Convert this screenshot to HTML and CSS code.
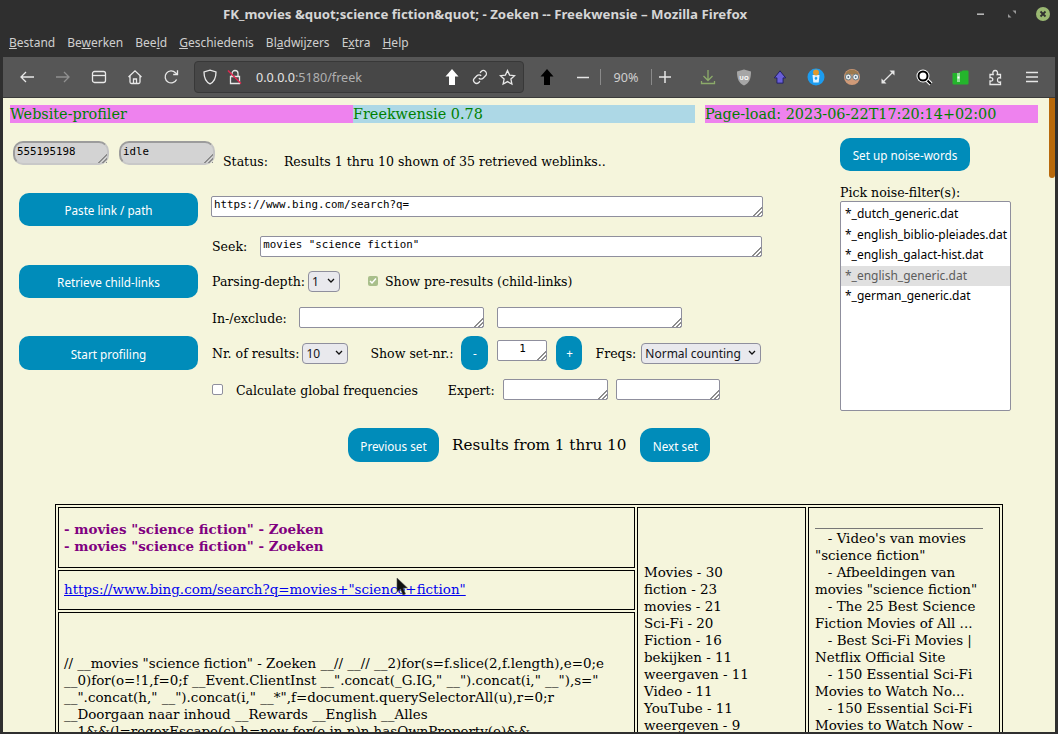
FILE: index.html
```html
<!DOCTYPE html>
<html lang="nl">
<head>
<meta charset="utf-8">
<title>FK_movies &amp;quot;science fiction&amp;quot; - Zoeken -- Freekwensie</title>
<link rel="stylesheet" href="styles.css">
</head>
<body>
<header class="titlebar">
  <div class="title">FK_movies &amp;quot;science fiction&amp;quot; - Zoeken -- Freekwensie – Mozilla Firefox</div>
  <div class="winctl">
    <svg width="12" height="12" viewBox="0 0 12 12"><rect x="1" y="5.400" width="7" height="1.600" fill="#b5b5b5"/></svg>
    <svg width="12" height="12" viewBox="0 0 12 12"><path d="M6.500 2.500h3.500v3.500zM2 9.500V6l3.500 3.500z" fill="#9a9a9a"/></svg>
    <svg width="14" height="14" viewBox="0 0 14 14"><circle cx="7" cy="7" r="7" fill="#9ab872"/><path d="M4.5 4.5l5 5M9.5 4.5l-5 5" stroke="#2f2f2f" stroke-width="1.8"/></svg>
  </div>
</header>
<nav class="menubar">
  <span><u>B</u>estand</span>
  <span>Be<u>w</u>erken</span>
  <span>Bee<u>l</u>d</span>
  <span><u>G</u>eschiedenis</span>
  <span>Bl<u>a</u>dwijzers</span>
  <span>E<u>x</u>tra</span>
  <span><u>H</u>elp</span>
</nav>
<div class="toolbar">
  <span class="tb"><svg width="16" height="16" viewBox="0 0 16 16" class="ln"><path d="M15 8H2M7 3L2 8l5 5"/></svg></span>
  <span class="tb dim"><svg width="16" height="16" viewBox="0 0 16 16" class="ln"><path d="M1 8h13M9 3l5 5-5 5"/></svg></span>
  <span class="tb"><svg width="16" height="16" viewBox="0 0 16 16" class="ln"><rect x="1.5" y="2.5" width="13" height="11" rx="2"/><path d="M1.5 6.5h13"/></svg></span>
  <span class="tb"><svg width="16" height="16" viewBox="0 0 16 16" class="ln"><path d="M1.5 8L8 1.8 14.5 8M3 7v6a1.5 1.5 0 0 0 1.5 1.5h7A1.5 1.5 0 0 0 13 13V7M6.5 14.5V10h3v4.5"/></svg></span>
  <span class="tb"><svg width="16" height="16" viewBox="0 0 16 16" class="ln"><path d="M13.6 10.5A6 6 0 1 1 12.5 3.8L14 5.2"/><path d="M14.5 1.2v4.3h-4.3" /></svg></span>
  <div class="urlbar">
    <svg class="ln shield" width="16" height="16" viewBox="0 0 16 16"><path d="M8 1.2l6 1.8c0 6-1.5 9.8-6 11.8-4.500-2-6-5.800-6-11.800z"/></svg>
    <svg class="lock" width="16" height="16" viewBox="0 0 16 16"><path d="M5 7V4.500a3 3 0 0 1 6 0V7M3.500 7.500h9v7h-9z" fill="none" stroke="#e8e8e8" stroke-width="1.300"/><path d="M1 1.500l13 13" stroke="#e22850" stroke-width="1.500"/></svg>
    <span class="url"><b>0.0.0.0</b>:5180/freek</span>
    <svg class="up" width="16" height="18" viewBox="0 0 16 18"><path d="M8 1l6.500 7.500H11V17H5V8.500H1.500z" fill="#fff"/></svg>
    <svg class="ln chain" width="16" height="16" viewBox="0 0 16 16"><path d="M6.800 9.200a3 3 0 0 0 4.300 0l2.400-2.400a3 3 0 0 0-4.300-4.300L8 3.700M9.200 6.800a3 3 0 0 0-4.300 0L2.500 9.200a3 3 0 0 0 4.300 4.300L8 12.300"/></svg>
    <svg class="ln star" width="17" height="17" viewBox="0 0 17 17"><path d="M8.500 1.500l2.100 4.600 5 .6-3.700 3.400 1 5-4.400-2.500-4.400 2.500 1-5L1.400 6.700l5-.6z"/></svg>
  </div>
  <span class="tb"><svg width="16" height="18" viewBox="0 0 16 18"><path d="M8 1l6.500 7.500H11V17H5V8.500H1.500z" fill="#000"/></svg></span>
  <span class="tb"><svg width="14" height="16" viewBox="0 0 14 16"><path d="M1 8.500h12" stroke="#e6e6e6" stroke-width="1.500"/></svg></span>
  <span class="zoomval">90%</span>
  <span class="tb plus"><svg width="14" height="14" viewBox="0 0 14 14"><path d="M1 7h12M7 1v12" stroke="#e6e6e6" stroke-width="1.500"/></svg></span>
  <span class="tb first"><svg width="16" height="16" viewBox="0 0 16 16" fill="none" stroke="#8cab6a" stroke-width="1.300"><path d="M8 1v10M3.500 7L8 11.500 12.500 7M1.500 12v2.500h13V12"/></svg></span>
  <span class="tb"><svg width="16" height="17" viewBox="0 0 16 17"><path d="M8 0.500l7 2c0 7-1.500 11.500-7 14-5.500-2.500-7-7-7-14z" fill="#a6a6a6"/><text x="8" y="11" class="ub">UO</text></svg></span>
  <span class="tb"><svg width="14" height="14" viewBox="0 0 16 16"><path d="M8 1l6.500 8h-3v6h-7V9h-3z" fill="#6a5fd8" stroke="#1c1a60" stroke-width="1"/></svg></span>
  <span class="tb"><svg width="18" height="18" viewBox="0 0 18 18"><circle cx="9" cy="9" r="8.500" fill="#1c9cf0"/><path d="M5.500 7h7l-.8 7.500H6.300z" fill="#dff2ff"/><circle cx="9" cy="4.500" r="3" fill="#e09a2e"/><path d="M7.500 10l1.500-1.500 1.500 1.500-1 1.800H8.300z" fill="#1c9cf0"/></svg></span>
  <span class="tb"><svg width="18" height="18" viewBox="0 0 18 18"><circle cx="9" cy="9" r="8" fill="#d09a78"/><path d="M2 6.500a7.500 7.500 0 0 1 14 0z" fill="#9c7a4e"/><circle cx="5.300" cy="9" r="3" fill="#e6edf0" stroke="#66797f"/><circle cx="12.700" cy="9" r="3" fill="#e6edf0" stroke="#66797f"/><circle cx="5.300" cy="9" r=".9" fill="#567"/><circle cx="12.700" cy="9" r=".9" fill="#567"/></svg></span>
  <span class="tb"><svg width="16" height="16" viewBox="0 0 16 16"><path d="M3 13L13 3" stroke="#e6e6e6" stroke-width="1.300"/><path d="M9.500 1.500h5v5zM6.500 14.500h-5v-5z" fill="#e6e6e6"/></svg></span>
  <span class="tb"><svg width="17" height="17" viewBox="0 0 17 17"><path d="M10.500 10.500l4.500 4.500" stroke="#fff" stroke-width="4"/><path d="M10.500 10.500l4.500 4.500" stroke="#000" stroke-width="2"/><circle cx="7" cy="7" r="6.500" fill="#fff"/><circle cx="7" cy="7" r="4.500" fill="#fff" stroke="#000" stroke-width="2"/></svg></span>
  <span class="tb"><svg width="17" height="15" viewBox="0 0 17 15"><path d="M0.500 3h6l1-1.500h2L10.500 0.500h5a1 1 0 0 1 1 1v12a1 1 0 0 1-1 1h-14a1 1 0 0 1-1-1z" fill="#24b52c"/><path d="M5 3h3v9H5z" fill="#8fe095"/><path d="M5.500 6.500h2v2h-2z" fill="#fff"/></svg></span>
  <span class="tb"><svg width="16" height="17" viewBox="0 0 16 17" class="ln"><path d="M2 5.500h3.200c-1-2.500.2-4 2-4s3 1.500 2 4h3.300v3.500c-2.300-.8-3 .5-3 2s.7 2.800 3 2v2.500H2v-3.500c2 .5 2.800-.5 2.800-1.500S4 8.200 2 8.700z"/></svg></span>
  <span class="tb"><svg width="14" height="12" viewBox="0 0 14 12"><path d="M1 1.500h12M1 6h12M1 10.500h12" stroke="#e6e6e6" stroke-width="1.300"/></svg></span>
</div>
<main class="page">
  <div class="banner">
    <div class="b-pink">Website-profiler</div>
    <div class="b-blue">Freekwensie 0.78</div>
    <div class="b-pink b-last">Page-load: 2023-06-22T17:20:14+02:00</div>
  </div>
  <div class="workspace">
    <div class="mainform">
      <div class="statusrow">
        <textarea class="gray">555195198</textarea>
        <textarea class="gray g2">idle</textarea>
        <span class="status">Status:</span>
        <span class="statusmsg">Results 1 thru 10 shown of 35 retrieved weblinks..</span>
      </div>
      <div class="actions">
        <div class="btncol">
          <button class="btn wide b1">Paste link / path</button>
          <button class="btn wide b2">Retrieve child-links</button>
          <button class="btn wide b3">Start profiling</button>
        </div>
        <div class="fields">
          <div class="row r1"><textarea class="ta t-url">https://www.bing.com/search?q=</textarea></div>
          <div class="row r2"><span>Seek:</span><textarea class="ta t-seek">movies "science fiction"</textarea></div>
          <div class="row"><span>Parsing-depth:</span><select class="sel s-depth"><option>1</option></select><input class="chk on" type="checkbox" checked><span>Show pre-results (child-links)</span></div>
          <div class="row"><span class="inex">In-/exclude:</span><textarea class="ta t-in"></textarea><textarea class="ta t-ex"></textarea></div>
          <div class="row"><span>Nr. of results:</span><select class="sel s-nr"><option>10</option></select><span class="setlabel">Show set-nr.:</span><button class="btn round minus">-</button><textarea class="ta t-set">1</textarea><button class="btn round plusb">+</button><span class="freq">Freqs:</span><select class="sel s-freq"><option>Normal counting</option></select></div>
          <div class="row"><input class="chk" type="checkbox"><span class="calc">Calculate global frequencies</span><span class="expert">Expert:</span><textarea class="ta t-e1"></textarea><textarea class="ta t-e2"></textarea></div>
        </div>
      </div>
    </div>
    <aside class="noise">
      <button class="btn setup">Set up noise-words</button>
      <div class="picklabel">Pick noise-filter(s):</div>
      <div class="listbox">
        <div>*_dutch_generic.dat</div>
        <div>*_english_biblio-pleiades.dat</div>
        <div>*_english_galact-hist.dat</div>
        <div class="picked">*_english_generic.dat</div>
        <div>*_german_generic.dat</div>
      </div>
    </aside>
  </div>
  <div class="pager">
    <button class="btn prev">Previous set</button>
    <span class="range">Results from 1 thru 10</span>
    <button class="btn next">Next set</button>
  </div>
  <table class="results">
    <tr class="rw1">
      <td class="c1 head"><b>- movies "science fiction" - Zoeken<br>- movies "science fiction" - Zoeken</b></td>
      <td class="c2" rowspan="3">Movies - 30<br>fiction - 23<br>movies - 21<br>Sci-Fi - 20<br>Fiction - 16<br>bekijken - 11<br>weergaven - 11<br>Video - 11<br>YouTube - 11<br>weergeven - 9</td>
      <td class="c3" rowspan="3"><hr>&nbsp;&nbsp;&nbsp;- Video's van movies "science fiction"<br>&nbsp;&nbsp;&nbsp;- Afbeeldingen van movies "science fiction"<br>&nbsp;&nbsp;&nbsp;- The 25 Best Science Fiction Movies of All ...<br>&nbsp;&nbsp;&nbsp;- Best Sci-Fi Movies | Netflix Official Site<br>&nbsp;&nbsp;&nbsp;- 150 Essential Sci-Fi Movies to Watch No...<br>&nbsp;&nbsp;&nbsp;- 150 Essential Sci-Fi Movies to Watch Now -</td>
    </tr>
    <tr class="rw2"><td class="c1"><a href="#">https://www.bing.com/search?q=movies+"science+fiction"</a></td></tr>
    <tr class="rw3"><td class="c1 body">// __movies "science fiction" - Zoeken __// __// __2)for(s=f.slice(2,f.length),e=0;e<br>__0)for(o=!1,f=0;f __Event.ClientInst __".concat(_G.IG," __").concat(i," __"),s="<br>__".concat(h," __").concat(i," __*",f=document.querySelectorAll(u),r=0;r<br>__Doorgaan naar inhoud __Rewards __English __Alles<br>__1&amp;&amp;(l=regexEscape(c),h=new for(e in n)n.hasOwnProperty(e)&amp;&amp;</td></tr>
  </table>
  <div class="scrollthumb"></div>
  <svg class="cursor" width="12" height="19" viewBox="0 0 12 19"><path d="M1 1v14l3.500-3 2.500 6 2.500-1-2.500-6h4.500z" fill="#111" stroke="#555" stroke-width=".6"/></svg>
</main>
</body>
</html>
```
FILE: styles.css
```css
* { box-sizing: border-box; }
html, body { margin: 0; height: 734px; overflow: hidden; }
body {
  background: #2f2f2f;
  display: flex;
  flex-direction: column;
  font-family: "DejaVu Serif", serif;
  font-size: 12.55px;
  color: #000;
}

/* window chrome */
.titlebar { height: 28px; display: flex; align-items: center; position: relative; flex: none; }
.title {
  width: 970px;
  text-align: center;
  font: 700 13.25px "Noto Sans", sans-serif;
  color: #d6d6d6;
}
.winctl { display: flex; align-items: center; margin-left: 6px; gap: 18px; }
.menubar {
  height: 29px; flex: none;
  display: flex; align-items: center;
  padding-left: 9px;
  font: 12px "Noto Sans", sans-serif;
  color: #cfcfcf;
}
.menubar span { margin-right: 12px; white-space: nowrap; }
.toolbar {
  height: 41px; flex: none;
  margin: 0 3px;
  background: #565656;
  border-bottom: 1px solid #3a3a3a;
  display: flex; align-items: center;
  padding-left: 6px;
}
.tb { width: 36px; height: 32px; display: flex; align-items: center; justify-content: center; flex: none; }
.dim { opacity: .4; }
.ln { fill: none; stroke: #e8e8e8; stroke-width: 1.3; }
.urlbar {
  width: 330px; height: 32px;
  margin: 0 5px;
  background: #474747;
  border: 1px solid #383838;
  border-radius: 4px;
  display: flex; align-items: center;
  flex: none;
  padding-left: 7px;
}
.lock { margin-left: 9px; }
.url { margin-left: 13px; font: 12.6px "Noto Sans", sans-serif; color: #b0b0b0; width: 188px; }
.url b { font-weight: 400; color: #e4e4e4; }
.chain { margin-left: 12px; }
.star { margin-left: 11px; }
.zoomval {
  width: 52px; flex: none; height: 16px; line-height: 16px; margin-left: -1px;
  border-left: 1px solid #8a8a8a; border-right: 1px solid #8a8a8a;
  text-align: center;
  font: 12.6px "Noto Sans", sans-serif; color: #cfcfcf;
}
.plus { margin-left: -5px; }
.first { margin-left: 7px; }
.ub { font: 700 6px "Noto Sans", sans-serif; fill: #fff; text-anchor: middle; }

/* page */
.page {
  flex: none;
  height: 634px;
  margin: 0 3px;
  background: #f5f5dc;
  position: relative;
  overflow: hidden;
}
.banner {
  display: grid;
  grid-template-columns: 343px 342px 343px;
  margin: 7px 0 0 7px;
  height: 18px;
  line-height: 18px;
  font-size: 14.4px;
  color: #008000;
}
.b-pink { background: #ee82ee; }
.b-blue { background: #add8e6; }
.b-last { margin-left: 10px; }
.workspace { display: flex; }
.mainform { width: 837px; flex: none; }
.statusrow { display: flex; align-items: flex-start; height: 66px; padding: 18px 0 0 10px; }
.gray {
  --bg: #d3d3d3;
  width: 96px; height: 24px;
  background: #d3d3d3;
  border: 2px solid;
  border-color: #9c9c9c #c4c4c4 #c8c8c8 #9c9c9c;
  border-radius: 10px;
  font: 10.8px/12px "DejaVu Sans Mono", monospace;
  padding: 3px 2px 0;
  margin: 0;
  outline: 0;
}
textarea::-webkit-resizer {
  background:
    linear-gradient(to bottom right, var(--bg, #fff) 50%, transparent 50%) right bottom / 10px 10px no-repeat,
    repeating-linear-gradient(-45deg, #8c8c8c 0 1px, transparent 1px 2.800px) right bottom / 10px 10px no-repeat;
}
.g2 { margin-left: 10px; }
.status { margin: 13px 0 0 8px; }
.statusmsg { margin: 13px 0 0 16px; white-space: nowrap; }

.actions { display: flex; }
.btncol { width: 193px; padding: 4px 0 0 16px; flex: none; display: flex; flex-direction: column; }
.btn {
  background: #008cba;
  color: #fff;
  border: 0;
  border-radius: 10px;
  font: 11.7px "Noto Sans", sans-serif;
  padding: 0;
  margin: 0;
}
.wide { width: 179px; height: 33px; }
.b2 { margin-top: 39px; }
.b3 { margin-top: 38px; height: 34px; padding-top: 1px; }
.fields { flex: none; width: 640px; padding-left: 16px; }
.row { height: 36px; display: flex; align-items: center; white-space: nowrap; }
.r1 { height: 34px; margin-bottom: 5px; }
.r2 { height: 35px; padding-top: 1px; }
.ta {
  display: block;
  height: 21px;
  margin: 0;
  padding: 2px 2px 0;
  border: 1px solid #8f8f9d;
  border-radius: 2px;
  background: #fff;
  font: 10.8px/12px "DejaVu Sans Mono", monospace;
  outline: 0;
}
.t-url { width: 552px; margin-left: -1px; }
.t-seek { width: 502px; margin-left: 13px; }
.t-in { width: 185px; margin-left: 12px; }
.t-ex { width: 185px; margin-left: 13px; }
.t-set { width: 50px; margin-left: 9px; text-align: center; margin-bottom: 5px; }
.t-e1 { width: 105px; margin-left: 8px; }
.t-e2 { width: 104px; margin-left: 8px; }
.inex { padding-top: 3px; }
.sel {
  appearance: none;
  height: 21px;
  margin: 0;
  padding: 0 0 0 3px;
  background: #e9e9ed url("data:image/svg+xml,%3Csvg xmlns='http://www.w3.org/2000/svg' width='8' height='6'%3E%3Cpath d='M1 1l3 3 3-3' fill='none' stroke='%23111' stroke-width='1.300'/%3E%3C/svg%3E") no-repeat right 4px center;
  border: 1px solid #8f8f9d;
  border-radius: 4px;
  font: 12px "Noto Sans", sans-serif;
  color: #15141a;
}
.s-depth { width: 32px; margin-left: 3px; }
.s-nr { width: 46px; margin-left: 3px; }
.s-freq { width: 120px; margin-left: 5px; }
.chk {
  appearance: none;
  width: 11px; height: 11px;
  margin: 0;
  background: #fff;
  border: 1px solid #8f8f9d;
  border-radius: 2px;
  flex: none;
}
.chk.on {
  margin: 0 7px 0 28px;
  border: 0;
  width: 10px; height: 10px;
  background: #a9bf8b url("data:image/svg+xml,%3Csvg xmlns='http://www.w3.org/2000/svg' width='10' height='10'%3E%3Cpath d='M2 5l2 2 4-4.500' fill='none' stroke='%23fff' stroke-width='1.500'/%3E%3C/svg%3E") no-repeat center;
}
.setlabel { margin-left: 22px; }
.round { width: 27px; height: 34px; border-radius: 10px; }
.minus { margin-left: 8px; }
.plusb { margin-left: 9px; width: 26px; }
.freq { margin-left: 13px; }
.calc { margin-left: 13px; padding-top: 3px; }
.expert { margin-left: 30px; padding-top: 3px; }

.noise { width: 190px; flex: none; padding-top: 15px; }
.setup { width: 130px; height: 33px; display: block; }
.picklabel { margin-top: 14px; height: 16px; line-height: 16px; }
.listbox {
  width: 171px; height: 210px;
  margin-top: 0;
  background: #fff;
  border: 1px solid #8f8f9d;
  border-radius: 2px;
  font: 12px "Noto Sans", sans-serif;
  padding-top: 2px;
  overflow: hidden;
}
.listbox div { height: 20.6px; line-height: 20.6px; padding-left: 4px; white-space: nowrap; color: #000; }
.listbox .picked { background: #e0e0e0; color: #5c5c5c; }

.pager { display: flex; align-items: center; padding-left: 345px; margin-top: 17px; height: 34px; }
.prev { width: 91px; height: 34px; border-radius: 12px; padding-top: 2px; }
.next { width: 70px; height: 34px; border-radius: 12px; padding-top: 2px; }
.range { font-size: 15.2px; margin: 0 14px 0 13px; white-space: nowrap; }

.results {
  border: 1px solid #000;
  border-collapse: separate;
  border-spacing: 2px;
  margin: 42px 0 0 52px;
  width: 948px;
  table-layout: fixed;
  font-size: 13.44px;
  line-height: 17px;
}
.results td { border: 1px solid #000; padding: 0; vertical-align: top; }
.c1 { width: 577px; padding-left: 5px !important; }
.c2 { width: 169px; padding: 56px 0 0 6px !important; }
.c3 { width: 192px; padding: 20px 4px 0 6px !important; }
.c3 hr { margin: 0 12px 1px 0; border: 0; border-top: 1px solid #777; height: 1px; }
.rw1 { height: 61px; }
.head { padding-top: 13px !important; color: #800080; }
.rw2 { height: 40px; }
.rw2 td { padding-top: 10px !important; }
.rw2 a { color: #0000ee; }
.body { padding-top: 42px !important; }
.scrollthumb {
  position: absolute; right: 0; top: 0;
  width: 6px; height: 80px;
  background: #b8690b;
  border-radius: 0 0 3px 3px;
}
.cursor { position: absolute; left: 393px; top: 479px; }
```
